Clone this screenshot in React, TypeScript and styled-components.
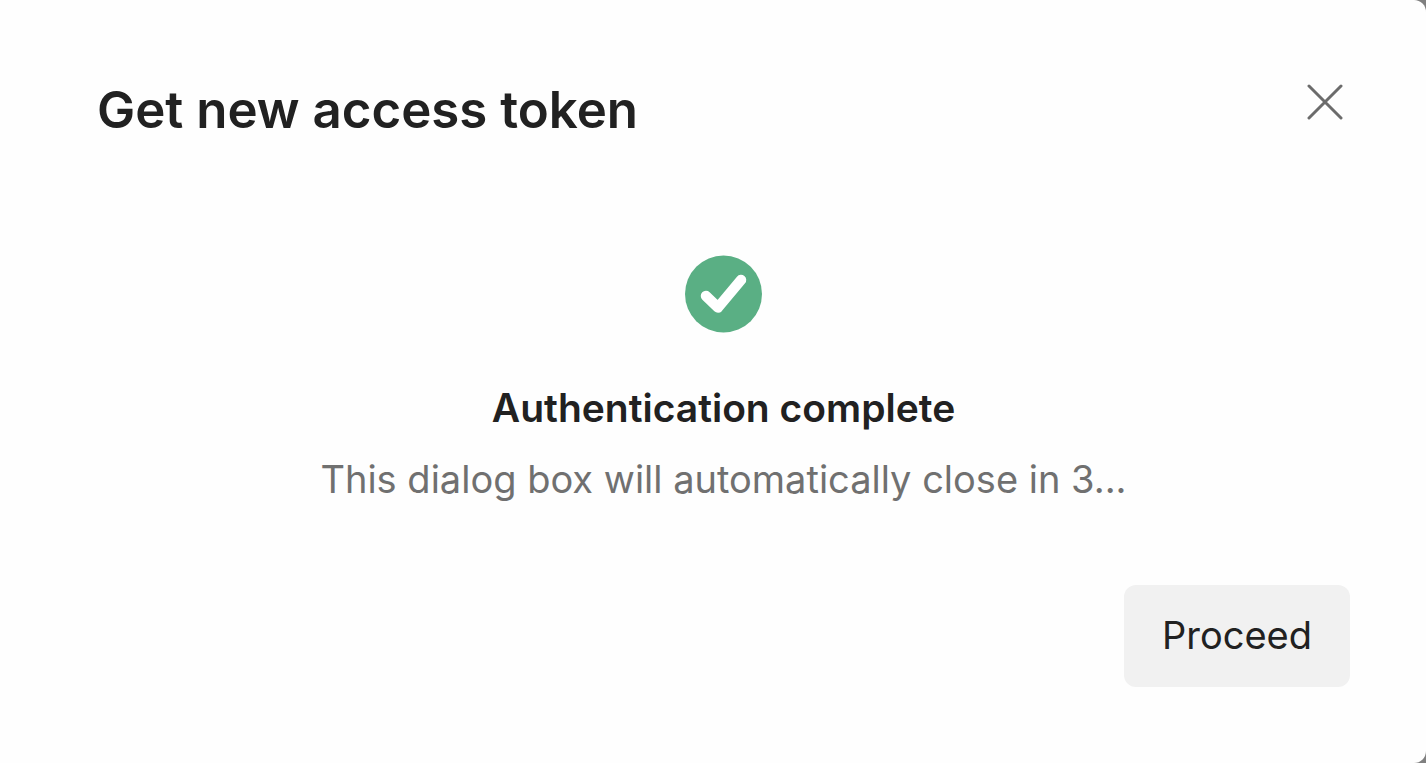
import React from "react";
import styled, { createGlobalStyle } from "styled-components";

const GlobalStyle = createGlobalStyle`
  *, *::before, *::after { box-sizing: border-box; }
  body {
    margin: 0;
    background: #808080;
    font-family: Inter, "Liberation Sans", sans-serif;
    color: #212121;
  }
`;

const Dialog = styled.section`
  display: flex;
  flex-direction: column;
  min-height: 100vh;
  padding: 80px 76px 76px 97px;
  background: #fefefe;
  border-radius: 0 12px 12px 0;
`;

const Header = styled.header`
  display: flex;
  align-items: flex-start;
  justify-content: space-between;
`;

const Title = styled.h1`
  margin: 0;
  font-size: 51px;
  line-height: 60px;
  font-weight: 600;
`;

const CloseButton = styled.button`
  display: flex;
  padding: 4px 7px;
  border: 0;
  background: none;
  color: #6b6b6b;
  cursor: pointer;
`;

const Status = styled.div`
  display: flex;
  flex: 1;
  flex-direction: column;
  align-items: center;
  padding-top: 115px;
  text-align: center;
`;

const Heading = styled.h2`
  margin: 51px 0 0;
  font-size: 39px;
  line-height: 48px;
  font-weight: 600;
`;

const Message = styled.p`
  margin: 23px 0 0;
  font-size: 38px;
  line-height: 48px;
  color: #707070;
`;

const Footer = styled.footer`
  display: flex;
  justify-content: flex-end;
`;

const ProceedButton = styled.button`
  padding: 26px 38px 28px;
  border: 0;
  border-radius: 12px;
  background: #f1f1f1;
  color: #212121;
  font: 400 38px/48px Inter, "Liberation Sans", sans-serif;
  cursor: pointer;
`;

export default function App() {
  return (
    <>
      <GlobalStyle />
      <Dialog role="dialog" aria-labelledby="dialog-title">
        <Header>
          <Title id="dialog-title">Get new access token</Title>
          <CloseButton type="button" aria-label="Close">
            <svg width="36" height="36" viewBox="0 0 36 36" fill="none" stroke="currentColor" strokeWidth="3" strokeLinecap="round">
              <path d="M2 2 34 34M34 2 2 34" />
            </svg>
          </CloseButton>
        </Header>
        <Status role="status">
          <svg width="78" height="78" viewBox="0 0 78 78" fill="none" aria-hidden="true">
            <circle cx="38.5" cy="39" r="38.5" fill="#5aaf84" />
            <path d="M21 41 33 52.500 56 25" stroke="#fff" strokeWidth="10.500" strokeLinecap="round" strokeLinejoin="round" />
          </svg>
          <Heading>Authentication complete</Heading>
          <Message>This dialog box will automatically close in 3...</Message>
        </Status>
        <Footer>
          <ProceedButton type="button">Proceed</ProceedButton>
        </Footer>
      </Dialog>
    </>
  );
}
